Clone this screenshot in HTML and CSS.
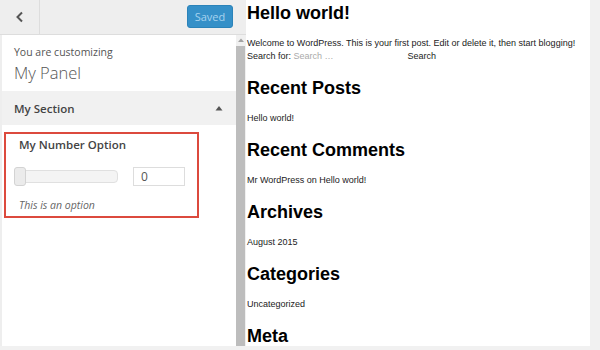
FILE: index.html
```html
<!DOCTYPE html>
<html>
<head>
<meta charset="utf-8">
<link rel="stylesheet" href="styles.css">
</head>
<body>
<div class="app">
  <aside class="sidebar">
    <div class="topbar">
      <div class="back">
        <svg width="12" height="14" viewBox="0 0 12 14"><path d="M8 2.5 L3.5 7 L8 11.5" fill="none" stroke="#555" stroke-width="2"/></svg>
      </div>
      <button class="saved">Saved</button>
    </div>
    <div class="body">
      <div class="panel">
        <div class="info">
          <div class="customizing">You are customizing</div>
          <div class="panel-title">My Panel</div>
        </div>
        <div class="section-head">
          <span>My Section</span>
          <svg class="caret" width="8" height="6" viewBox="0 0 8 6"><path d="M0.5 5.5 L4 1 L7.5 5.5 Z" fill="#555"/></svg>
        </div>
        <div class="control">
          <div class="control-title">My Number Option</div>
          <div class="control-row">
            <div class="slider"><div class="thumb"></div></div>
            <div class="number">0</div>
          </div>
          <div class="desc">This is an option</div>
        </div>
      </div>
      <div class="scrollbar">
        <svg class="scroll-up" width="6" height="4" viewBox="0 0 6 4"><path d="M0 4 L3 0.5 L6 4 Z" fill="#a3a3a3"/></svg>
        <div class="scroll-thumb"></div>
      </div>
    </div>
  </aside>
  <main class="preview">
    <h1 class="title">Hello world!</h1>
    <p class="welcome">Welcome to WordPress. This is your first post. Edit or delete it, then start blogging!</p>
    <div class="search">Search for: <span class="search-input">Search …</span><span class="search-btn">Search</span></div>
    <h2 class="widget">Recent Posts</h2>
    <p class="item">Hello world!</p>
    <h2 class="widget">Recent Comments</h2>
    <p class="item">Mr WordPress on Hello world!</p>
    <h2 class="widget">Archives</h2>
    <p class="item">August 2015</p>
    <h2 class="widget">Categories</h2>
    <p class="item">Uncategorized</p>
    <h2 class="widget">Meta</h2>
  </main>
</div>
</body>
</html>
```
FILE: styles.css
```css
html, body {
  margin: 0;
  padding: 0;
}
body {
  background: #f1f1f1;
  width: 600px;
  height: 350px;
  overflow: hidden;
}
.app {
  display: flex;
  height: 346px;
  width: 590px;
}
.sidebar {
  width: 246px;
  display: flex;
  flex-direction: column;
  background: #eeeeee;
  font-family: "Open Sans", "Noto Sans", sans-serif;
}
.topbar {
  height: 34px;
  border-bottom: 1px solid #dddddd;
  display: flex;
  align-items: center;
}
.back {
  width: 40px;
  height: 34px;
  border-right: 1px solid #dddddd;
  box-sizing: border-box;
  display: flex;
  align-items: center;
  justify-content: center;
}
.saved {
  margin-left: auto;
  margin-right: 13px;
  margin-top: -1px;
  width: 46px;
  height: 23px;
  padding: 0;
  border: 1px solid #2b83b9;
  border-radius: 3px;
  background: #3590c8;
  color: #a7d3ef;
  font-family: "Open Sans", "Noto Sans", sans-serif;
  font-size: 11px;
}
.body {
  flex: 1;
  display: flex;
  min-height: 0;
}
.panel {
  flex: 1;
  margin-left: 2px;
  background: #ffffff;
}
.info {
  padding: 8px 12px 6px;
  color: #555555;
}
.customizing {
  font-size: 10.5px;
  line-height: 18px;
}
.panel-title {
  font-size: 16.5px;
  font-weight: 300;
  line-height: 24px;
}
.section-head {
  height: 34px;
  background: #f1f1f1;
  display: flex;
  align-items: center;
  justify-content: space-between;
  padding: 0 13px 0 12px;
  font-size: 11.5px;
  font-weight: 600;
  color: #444444;
}
.caret {
  margin-top: -1px;
}
.control {
  margin: 7px 0 0 2px;
  width: 195px;
  height: 86px;
  box-sizing: border-box;
  border: 2px solid #dc4a3d;
  padding: 2px 0 0 8px;
  color: #555555;
}
.control-title {
  padding-left: 5px;
  font-size: 11.5px;
  font-weight: 600;
  line-height: 18px;
  color: #444444;
}
.control-row {
  margin-top: 13px;
  display: flex;
  align-items: center;
  gap: 15px;
  height: 19px;
}
.slider {
  position: relative;
  width: 104px;
  height: 13px;
  box-sizing: border-box;
  border: 1px solid #e0e0e0;
  border-radius: 4px;
  background: #f4f4f4;
}
.thumb {
  position: absolute;
  left: -1px;
  top: -4px;
  width: 12px;
  height: 19px;
  box-sizing: border-box;
  border: 1px solid #d3d3d3;
  border-radius: 3px;
  background: #ebebeb;
}
.number {
  width: 52px;
  height: 19px;
  box-sizing: border-box;
  border: 1px solid #dddddd;
  padding-left: 7px;
  font-size: 12px;
  line-height: 17px;
  color: #555555;
}
.desc {
  margin-top: 11px;
  padding-left: 5px;
  font-size: 10.5px;
  font-style: italic;
  line-height: 16px;
  color: #666666;
}
.scrollbar {
  width: 10px;
  background: #f0f0f0;
  display: flex;
  flex-direction: column;
  align-items: center;
}
.scroll-up {
  margin-top: 3px;
}
.scroll-thumb {
  margin-top: 4px;
  width: 9px;
  flex: 1;
  background: #bdbdbd;
  align-self: flex-start;
}
.preview {
  flex: 1;
  background: #ffffff;
  padding: 2px 0 0 1px;
  overflow: hidden;
  font-family: "Liberation Sans", Arial, sans-serif;
  color: #222222;
}
.title, .widget {
  margin: 0;
  font-size: 18px;
  font-weight: bold;
  line-height: 22px;
  color: #000000;
}
.welcome {
  margin: 13px 0 0;
  font-size: 9px;
  line-height: 13px;
}
.search {
  font-size: 9px;
  line-height: 13px;
  display: flex;
  white-space: pre;
  margin-bottom: 14px;
}
.search-input {
  width: 114px;
  color: #aaaaaa;
}
.search-btn {
  color: #222222;
}
.widget + .item {
  margin: 13px 0 15px;
}
.item {
  font-size: 9px;
  line-height: 12px;
}
```
